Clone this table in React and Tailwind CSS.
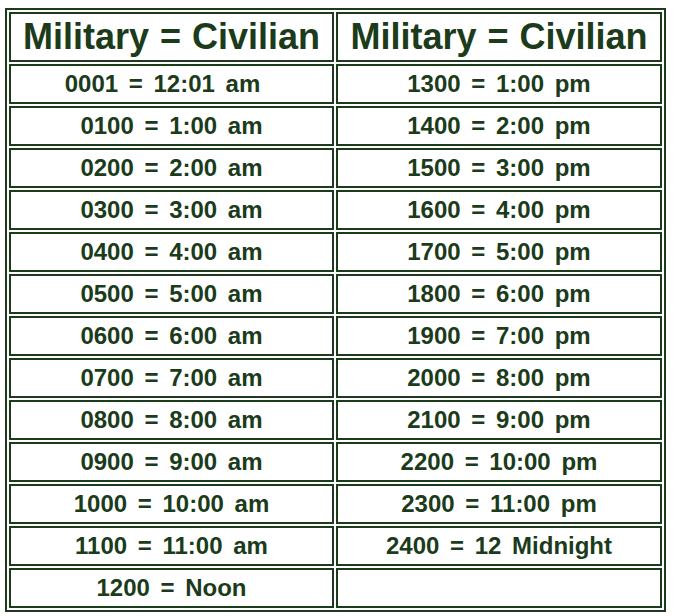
import React from 'react';

const rows = [
  ['0001 = 12:01 am', '1300 = 1:00 pm'],
  ['0100 = 1:00 am', '1400 = 2:00 pm'],
  ['0200 = 2:00 am', '1500 = 3:00 pm'],
  ['0300 = 3:00 am', '1600 = 4:00 pm'],
  ['0400 = 4:00 am', '1700 = 5:00 pm'],
  ['0500 = 5:00 am', '1800 = 6:00 pm'],
  ['0600 = 6:00 am', '1900 = 7:00 pm'],
  ['0700 = 7:00 am', '2000 = 8:00 pm'],
  ['0800 = 8:00 am', '2100 = 9:00 pm'],
  ['0900 = 9:00 am', '2200 = 10:00 pm'],
  ['1000 = 10:00 am', '2300 = 11:00 pm'],
  ['1100 = 11:00 am', '2400 = 12 Midnight'],
  ['1200 = Noon', ''],
];

const App = () => {
  return (
    <div className="bg-white w-[674px] h-[616px] pt-[8px] pl-[5px] font-['Liberation_Sans',Arial,sans-serif] text-[#1b3b1b]">
      <table className="table-fixed border-separate border-spacing-[2px] border-2 border-[#1b3b1b] w-[661px]">
        <thead>
          <tr>
            <th className="w-[325px] h-[50px] p-0 border-2 border-[#1b3b1b] text-[36px] leading-none font-bold [word-spacing:1px] text-center">
              Military = Civilian
            </th>
            <th className="w-[326px] h-[50px] p-0 border-2 border-[#1b3b1b] text-[36px] leading-none font-bold [word-spacing:1px] text-center">
              Military = Civilian
            </th>
          </tr>
        </thead>
        <tbody>
          {rows.map((row, i) => (
            <tr key={i}>
              {row.map((cell, j) => (
                <td
                  key={j}
                  className={
                    'h-[40px] py-0 pl-0 border-2 border-[#1b3b1b] text-[24px] leading-none font-bold [word-spacing:4px] text-center ' +
                    (i === 0 && j === 0 ? 'pr-[18px]' : 'pr-0')
                  }
                >
                  {cell}
                </td>
              ))}
            </tr>
          ))}
        </tbody>
      </table>
    </div>
  );
};

export default App;
